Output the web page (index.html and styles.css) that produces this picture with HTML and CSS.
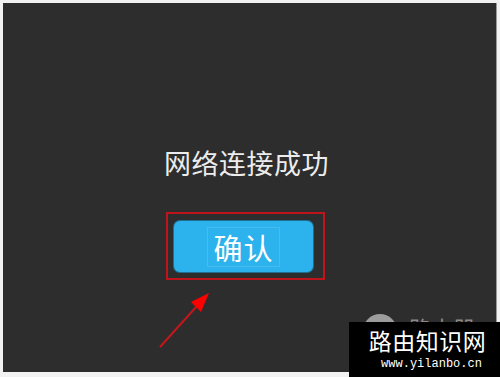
FILE: index.html
```html
<!DOCTYPE html>
<html lang="zh">
<head>
<meta charset="utf-8">
<link rel="stylesheet" href="styles.css">
</head>
<body>
<div class="frame">
  <div class="panel">
    <div class="title">网络连接成功</div>
    <div class="highlight">
      <button class="confirm"><span class="label">确认</span></button>
    </div>
    <svg class="arrow" width="70" height="70" viewBox="0 0 70 70">
      <line x1="7" y1="63" x2="44" y2="22" stroke="#c4161c" stroke-width="2"/>
      <polygon points="56,9 38,18 48,28" fill="#ff0000"/>
    </svg>
    <div class="behind">
      <div class="behind-row">
        <span class="circle"></span><span class="behind-text">路由器</span>
      </div>
    </div>
  </div>
  <div class="mark">
    <div class="mark-title">路由知识网</div>
    <div class="mark-url">www.yilanbo.cn</div>
  </div>
</div>
</body>
</html>
```
FILE: styles.css
```css
html, body {
  margin: 0;
  padding: 0;
  background: #f2f2f2;
}
.frame {
  position: relative;
  width: 500px;
  height: 377px;
  padding: 3px 3px 5px 3px;
  box-sizing: border-box;
  overflow: hidden;
}
.panel {
  position: relative;
  height: 369px;
  background: #2d2d2d;
  border-right: 1px solid #9a9a9a;
  display: flex;
  flex-direction: column;
  align-items: center;
  overflow: hidden;
  font-family: "Noto Sans CJK SC", "Noto Sans", sans-serif;
}
.title {
  margin-top: 144px;
  margin-left: -6px;
  font-size: 27px;
  line-height: 31px;
  color: #ececec;
  letter-spacing: 0.5px;
}
.highlight {
  margin-top: 34px;
  margin-left: -8px;
  border: 2px solid #c0141c;
  padding: 7px 10px 6px 6px;
}
.confirm {
  display: flex;
  align-items: center;
  justify-content: center;
  width: 139px;
  height: 51px;
  border: none;
  border-radius: 6px;
  background: #2cb2ec;
  box-shadow: 0 0 0 1px #1f6f93;
  padding: 0;
  font-family: "Noto Sans CJK SC", "Noto Sans", sans-serif;
}
.label {
  font-size: 29px;
  line-height: 38px;
  color: #ffffff;
  padding: 0 5px;
  border: 1px solid rgba(255, 255, 255, 0.12);
  letter-spacing: 1px;
}
.arrow {
  position: absolute;
  left: 150px;
  top: 281px;
}
.behind {
  position: absolute;
  left: 360px;
  top: 308px;
  width: 130px;
  height: 11px;
  overflow: hidden;
}
.behind-row {
  display: flex;
  align-items: flex-start;
  gap: 12px;
  padding-top: 3px;
}
.circle {
  flex: none;
  width: 34px;
  height: 34px;
  border-radius: 50%;
  background: #9c9c9c;
}
.behind-text {
  font-size: 22px;
  line-height: 22px;
  color: #8a8a8a;
  padding-top: 2px;
}
.mark {
  position: absolute;
  left: 349px;
  top: 322px;
  width: 151px;
  height: 55px;
  background: #000;
  display: flex;
  flex-direction: column;
  align-items: center;
}
.mark-title {
  margin-top: 4px;
  margin-left: 6px;
  font-family: "Noto Sans CJK SC", sans-serif;
  font-size: 23px;
  line-height: 28px;
  color: #fff;
  letter-spacing: 0.5px;
}
.mark-url {
  margin-top: 2px;
  margin-left: 14px;
  font-family: "Liberation Mono", monospace;
  font-size: 12px;
  line-height: 16px;
  color: #fff;
}
```
